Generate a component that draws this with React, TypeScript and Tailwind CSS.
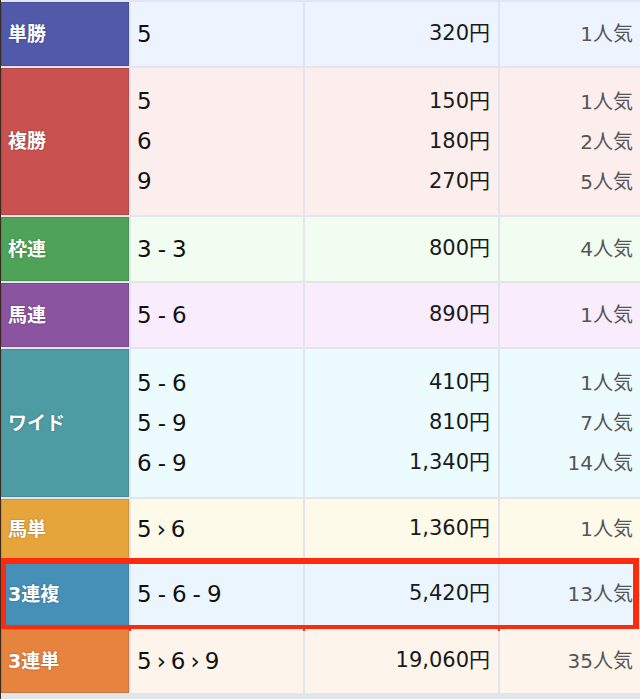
type Line = { combo: string[]; sep: string; yen: string; pop: string };
type Row = { label: string; head: string; bg: string; h: string; lines: Line[]; hot?: boolean };

const L = (c: string, yen: string, pop: string): Line => {
  const sep = c.includes('>') ? '›' : '-';
  return { combo: c.split(/[->]/), sep, yen, pop };
};

const rows: Row[] = [
  { label: '単勝', head: 'bg-[#5159ab]', bg: 'bg-[#eef4ff]', h: 'h-[64px]', lines: [L('5', '320円', '1人気')] },
  {
    label: '複勝', head: 'bg-[#c95150]', bg: 'bg-[#fdeeee]', h: 'h-[147px]',
    lines: [L('5', '150円', '1人気'), L('6', '180円', '2人気'), L('9', '270円', '5人気')],
  },
  { label: '枠連', head: 'bg-[#4ea358]', bg: 'bg-[#f1fdf0]', h: 'h-[64px]', lines: [L('3-3', '800円', '4人気')] },
  { label: '馬連', head: 'bg-[#8a54a0]', bg: 'bg-[#f9ecfd]', h: 'h-[64px]', lines: [L('5-6', '890円', '1人気')] },
  {
    label: 'ワイド', head: 'bg-[#4e9ca3]', bg: 'bg-[#ebfbfe]', h: 'h-[148px]',
    lines: [L('5-6', '410円', '1人気'), L('5-9', '810円', '7人気'), L('6-9', '1,340円', '14人気')],
  },
  { label: '馬単', head: 'bg-[#e6a53a]', bg: 'bg-[#fefaea]', h: 'h-[60px]', lines: [L('5>6', '1,360円', '1人気')] },
  { label: '3連複', head: 'bg-[#4690b8]', bg: 'bg-[#eaf5fe]', h: 'h-[66px]', lines: [L('5-6-9', '5,420円', '13人気')], hot: true },
  { label: '3連単', head: 'bg-[#e5833f]', bg: 'bg-[#fdf5ec]', h: 'h-[64px]', lines: [L('5>6>9', '19,060円', '35人気')] },
];

const Combo = ({ line }: { line: Line }) => (
  <div className="h-[40px] flex items-center">
    {line.combo.map((n, i) => (
      <span key={i} className="flex items-center">
        {i > 0 && <span className={line.sep === '-' ? 'mx-[6px]' : 'mx-[5px]'}>{line.sep}</span>}
        {n}
      </span>
    ))}
  </div>
);

export default function App() {
  return (
    <div
      className="w-[640px] h-[699px] bg-[#e2e5ee] border-l border-[#3a2a20] pt-[2px] flex flex-col gap-[2px] overflow-hidden"
      style={{ fontFamily: '"DejaVu Sans", "Noto Sans CJK JP", sans-serif' }}
    >
      {rows.map((r) => (
        <div key={r.label} className={`relative grid grid-cols-[128px_172px_193px_1fr] gap-[2px] ${r.h}`}>
          <div className={`${r.head} border border-black/10 flex items-center pl-[6px] text-white font-bold text-[19px] [text-shadow:0_0_2px_rgba(0,0,0,0.35)]`}>
            {r.label}
          </div>
          <div className={`${r.bg} flex flex-col justify-center pl-[6px] text-[23px] text-[#111]`}>
            {r.lines.map((l, i) => (
              <Combo key={i} line={l} />
            ))}
          </div>
          <div className={`${r.bg} flex flex-col justify-center items-end pr-[8px] text-[21px] text-[#1a1a1a]`}>
            {r.lines.map((l, i) => (
              <div key={i} className="h-[40px] flex items-center">{l.yen}</div>
            ))}
          </div>
          <div className={`${r.bg} flex flex-col justify-center items-end pr-[7px] text-[20px] text-[#555]`}>
            {r.lines.map((l, i) => (
              <div key={i} className="h-[40px] flex items-center">{l.pop}</div>
            ))}
          </div>
          {r.hot && (
            <div className="absolute left-[-1px] top-[-3px] w-[639px] h-[73px] border-[6px] border-[#fe2a0e] pointer-events-none" />
          )}
        </div>
      ))}
    </div>
  );
}
